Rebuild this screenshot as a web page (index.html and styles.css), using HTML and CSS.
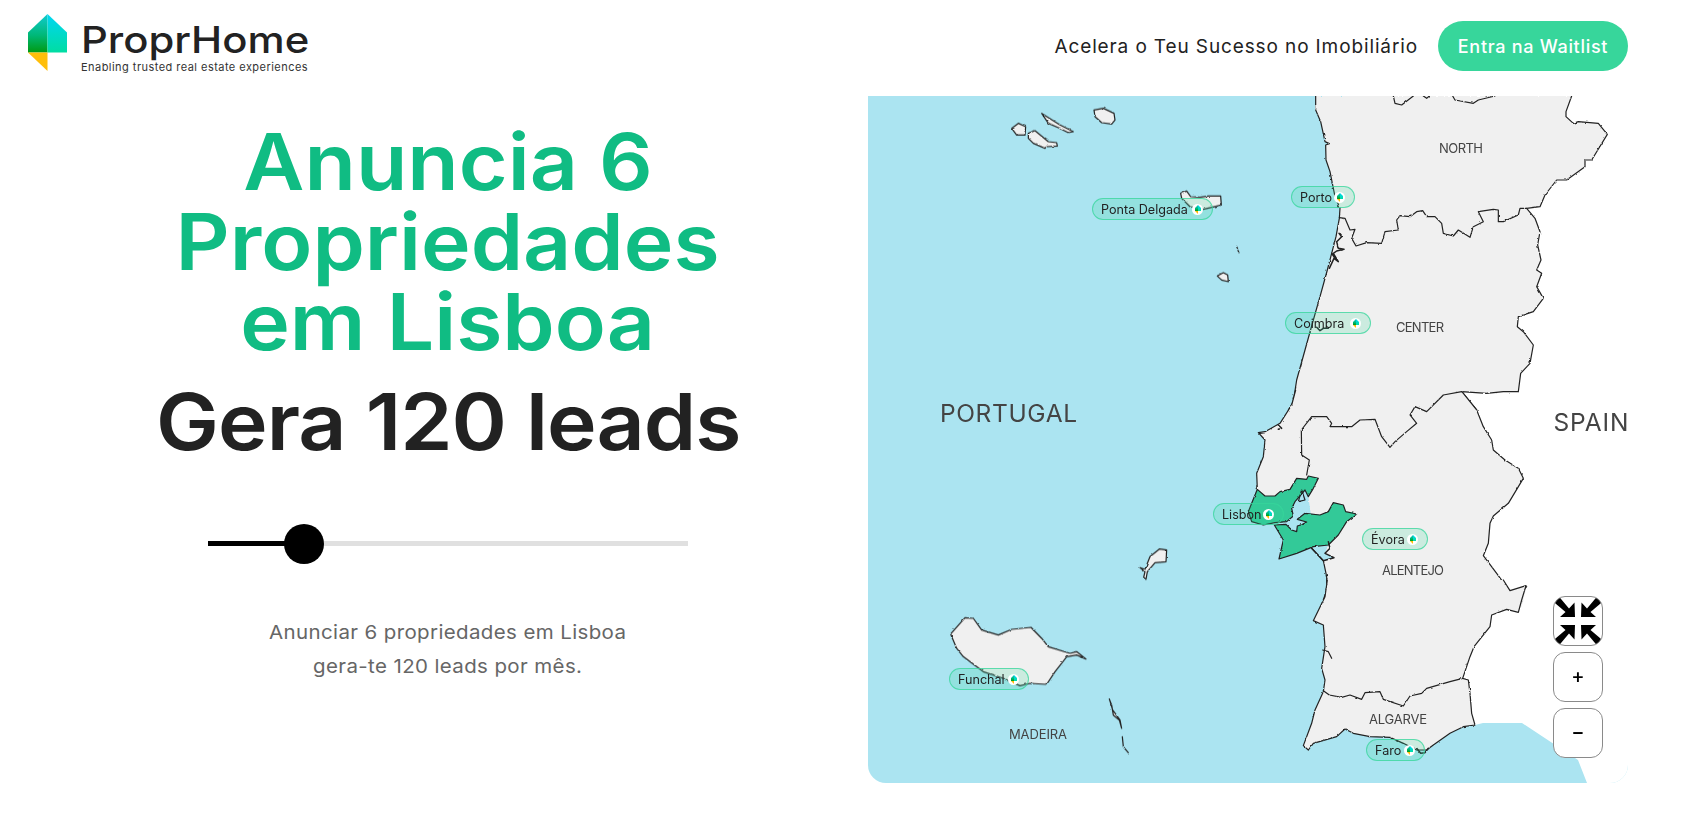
FILE: index.html
```html
<!DOCTYPE html>
<html lang="pt">
<head>
<meta charset="utf-8">
<title>ProprHome</title>
<link rel="stylesheet" href="styles.css">
</head>
<body>
<svg class="defs" width="0" height="0" aria-hidden="true">
  <defs>
    <linearGradient id="logoLeft" x1="0" y1="0" x2="0" y2="1">
      <stop offset="0" stop-color="#10CBD0"/>
      <stop offset=".55" stop-color="#00B878"/>
      <stop offset="1" stop-color="#009A12"/>
    </linearGradient>
    <linearGradient id="logoRight" x1="0" y1="0" x2="0" y2="1">
      <stop offset="0" stop-color="#00D6F4"/>
      <stop offset="1" stop-color="#00DDA2"/>
    </linearGradient>
    <symbol id="logoMark" viewBox="0 0 39 57">
      <path fill="url(#logoLeft)" d="M0 18.5 19.5 0V38.5H0Z"/>
      <path fill="url(#logoRight)" d="M19.5 0 39 18.5V38.5H19.5Z"/>
      <path fill="#FFBE0A" d="M0 38.5H19.5V57Z"/>
    </symbol>
    <path id="fitArrow" d="M22 21H7L12.500 16 0 5.500 5.500 0 16 12.500 21.500 6.500Z"/>
  </defs>
</svg>

<header class="topbar">
  <a class="brand" href="#">
    <svg class="brand-mark"><use href="#logoMark"/></svg>
    <span class="brand-text">
      <span class="brand-name">ProprHome</span>
      <span class="brand-tag">Enabling trusted real estate experiences</span>
    </span>
  </a>
  <nav class="topnav">
    <span class="nav-text">Acelera o Teu Sucesso no Imobiliário</span>
    <a class="cta" href="#">Entra na Waitlist</a>
  </nav>
</header>

<main class="content">
  <section class="pitch">
    <h1 class="headline">
      <span class="headline-line">Anuncia 6</span>
      <span class="headline-line">Propriedades</span>
      <span class="headline-line">em Lisboa</span>
    </h1>
    <h2 class="result">Gera 120 leads</h2>
    <div class="slider">
      <div class="slider-fill"></div>
      <div class="slider-thumb"></div>
    </div>
    <p class="summary">Anunciar 6 propriedades em Lisboa<br>gera-te 120 leads por mês.</p>
  </section>

  <section class="map">
    <svg class="map-art" viewBox="868 96 760 687" width="760" height="687">
      <defs>
        <filter id="rough" filterUnits="userSpaceOnUse" x="868" y="96" width="760" height="687" color-interpolation-filters="sRGB">
          <feTurbulence type="fractalNoise" baseFrequency=".22" numOctaves="2" seed="4"/>
          <feDisplacementMap in="SourceGraphic" scale="2.2" xChannelSelector="R" yChannelSelector="G"/>
        </filter>
      </defs>
      <path class="outside" d="M1345 96H1628V783H1587L1578 760 1522 723 1483 723 1475 725H1400L1345 600Z"/>
      <g filter="url(#rough)">
        <g transform="translate(1270 90) scale(.33333)">
          <path class="land" d="M137 18 137 60 152 95 165 155 178 161 167 165 168 210 180 245 195 320 210 355 208 385 198 440 185 490 172 540 150 620 130 690 105 780 80 870 70 935 55 960 620 960 575 905 650 910 700 905 745 905 752 850 780 820 790 765 760 725 742 710 745 680 790 665 820 625 800 590 815 550 800 540 813 510 803 465 810 425 795 385 770 355 810 350 825 315 860 270 890 270 945 230 945 210 965 210 1012 133 985 100 925 95 910 100 888 80 888 65 905 18Z"/>
          <path class="line" d="M137 18 137 60 152 95 165 155 178 161 167 165 168 210 180 245 195 320 210 355 208 385 198 440 185 490 172 540 150 620 130 690 105 780 80 870 70 935 55 960"/>
          <path class="line" d="M620 960 575 905 650 910 700 905 745 905 752 850 780 820 790 765 760 725 742 710 745 680 790 665 820 625 800 590 815 550 800 540 813 510 803 465 810 425 795 385 770 355 810 350 825 315 860 270 890 270 945 230 945 210 965 210 1012 133 985 100 925 95 910 100 888 80 888 65 905 18"/>
          <path class="line" d="M208 383 225 385 240 420 255 418 245 445 258 468 290 458 335 460 345 425 385 420 380 390 390 377 420 380 440 365 458 362 470 380 495 380 515 400 520 430 550 438 565 420 600 442 610 410 640 395 625 365 670 358 685 360 685 395 700 395 745 375 750 355 770 355"/>
          <path class="line" d="M370 18 375 40 395 45 430 18M460 18 470 25 478 18M548 18 555 30 610 40 625 30 675 18"/>
          <path class="line" d="M430 955 450 950 480 950 520 912 550 915 575 905"/>
          <path class="line thick" d="M207 430 215 440 200 455 205 475 222 478 200 483 190 490 205 515 192 505 178 535M185 490 195 505"/>
          <path class="line thick" d="M140 712 150 722 160 715 175 715"/>
        </g>
        <g transform="translate(1180 390) scale(.33333)">
          <path class="land" d="M347 0 335 45 300 100 255 125 235 128 255 150 250 200 230 250 232 298 255 318 285 318 300 305 330 298 350 265 380 268 385 258 415 265 400 295 385 320 392 370 420 375 445 365 460 338 490 345 497 365 530 372 500 395 475 435 445 465 435 490 460 503 430 512 440 560 440 600 420 660H1000L1025 650 1040 590 1030 600 990 605 950 550 910 497 925 460 930 400 940 378 985 340 1030 265 1015 235 975 210 940 180 935 150 910 110 890 60 850 10 845 0Z"/>
          <path class="line" d="M347 0 335 45 300 100 255 125 235 128 255 150 250 200 230 250 232 298"/>
          <path class="line" d="M395 475 430 512 440 560 440 600 420 660"/>
          <path class="line" d="M1040 590 1030 600 990 605 950 550 910 497 925 460 930 400 940 378 985 340 1030 265 1015 235 975 210 940 180 935 150 910 110 890 60 850 10 845 5"/>
          <path class="line" d="M985 660 1000 658M380 255 388 210 365 195 364 120 395 80 440 80 455 100 450 110 515 110 540 90 585 88 605 140 630 172 645 155 680 125 710 100 690 75 705 50 740 65 790 15 845 5"/>
          <path class="region" d="M232 298 255 318 285 318 300 305 330 298 350 265 380 268 385 258 415 265 400 295 385 320 375 300 345 335 335 355 340 378 320 395 285 398 250 405 215 395 205 365 215 340Z"/>
          <path class="region" d="M283 405 318 403 335 420 350 425 352 408 365 404 380 396 352 388 375 370 420 375 445 365 460 338 490 345 497 365 530 372 500 395 475 435 445 465 400 470 350 490 297 507 310 450Z"/>
          <path class="line thick" d="M445 455 450 475 435 490 462 503 430 512 395 475"/>
          <path class="line thick" d="M295 105 305 115 295 118"/>
          <path class="line" d="M365 300 355 335 375 330Z"/>
        </g>
        <g transform="translate(1270 580) scale(.33333)">
          <path class="land" d="M172 0 165 50 130 122 160 135 165 200 155 265 165 300 160 335 135 390 125 430 100 497 115 510 130 490 200 470 225 447 250 460 300 470 360 472 400 490 440 510 470 510 490 495 540 460 580 440 615 435 605 400 600 340 595 300 578 295 600 230 612 200 660 140 665 105 710 88 745 97 755 60 768 17 720 32 700 0Z"/>
          <path class="line" d="M172 0 165 50 130 122 160 135 165 200 155 265 165 300 160 335 135 390 125 430 100 497 115 510 130 490 200 470 225 447 250 460 300 470 360 472 400 490 440 510 470 510 490 495 540 460 580 440 615 435 605 400 600 340 595 300 578 295 600 230 612 200 660 140 665 105 710 88 745 97 755 60 768 17 720 32 700 0"/>
          <path class="line" d="M160 332 178 345 215 352 240 345 275 358 285 338 330 335 340 358 400 378 420 348 455 340 470 325 540 305 578 295"/>
          <path class="line" d="M158 210 175 215 185 235"/>
          <path class="line thick" d="M440 505 452 520 465 518 475 505"/>
        </g>
        <g transform="translate(860 90) scale(.33333)">
          <path class="isle" d="M455 115 475 100 497 110 495 135 470 135Z"/>
          <path class="isle" d="M505 130 525 122 565 155 590 158 592 168 560 170 555 175 520 160 505 145Z"/>
          <path class="isle" d="M545 70 600 105 640 125 625 128 595 113 565 100Z"/>
          <path class="isle" d="M702 60 730 55 762 70 765 90 755 102 725 98 705 80Z"/>
          <path class="isle" d="M962 310 980 303 992 320 1020 322 1045 318 1082 318 1084 345 1030 358 990 350 965 325Z"/>
          <path class="isle" d="M1072 558 1090 548 1103 555 1105 575 1085 570Z"/>
          <path class="line" d="M1130 470 1133 476M1134 481 1137 488"/>
        </g>
        <g transform="translate(860 520) scale(.33333)">
          <path class="isle" d="M840 143 855 148 870 110 898 87 920 90 918 125 885 128 862 155 858 178 851 172 855 155Z"/>
          <path class="isle" d="M272 342 315 293 340 295 365 330 415 345 455 328 513 322 545 355 565 380 630 400 650 395 678 417 650 405 620 410 605 430 585 455 560 493 510 490 480 497 430 475 370 455 310 410 290 385Z"/>
          <path class="isle" d="M748 537 758 570 780 600 785 625 778 600 760 585 755 555Z"/>
          <path class="line" d="M787 650 790 680 805 698"/>
        </g>
      </g>
      <text class="label-lg" x="1008.500" y="421.500" text-anchor="middle" textLength="137">PORTUGAL</text>
      <text class="label-lg" x="1591" y="430.500" text-anchor="middle" textLength="75">SPAIN</text>
      <text class="label-sm" x="1461" y="153" text-anchor="middle" textLength="44">NORTH</text>
      <text class="label-sm" x="1420" y="331.500" text-anchor="middle" textLength="48">CENTER</text>
      <text class="label-sm" x="1413" y="574.500" text-anchor="middle" textLength="62">ALENTEJO</text>
      <text class="label-sm" x="1398" y="724" text-anchor="middle" textLength="58">ALGARVE</text>
      <text class="label-sm" x="1038" y="739" text-anchor="middle" textLength="58">MADEIRA</text>
    </svg>

    <div class="pin pin-delgada"><span>Ponta Delgada</span><i class="pin-dot"><svg><use href="#logoMark"/></svg></i></div>
    <div class="pin pin-porto"><span>Porto</span><i class="pin-dot"><svg><use href="#logoMark"/></svg></i></div>
    <div class="pin pin-coimbra"><span>Coimbra</span><i class="pin-dot"><svg><use href="#logoMark"/></svg></i></div>
    <div class="pin pin-lisbon"><span>Lisbon</span><i class="pin-dot"><svg><use href="#logoMark"/></svg></i></div>
    <div class="pin pin-evora"><span>Évora</span><i class="pin-dot"><svg><use href="#logoMark"/></svg></i></div>
    <div class="pin pin-faro"><span>Faro</span><i class="pin-dot"><svg><use href="#logoMark"/></svg></i></div>
    <div class="pin pin-funchal"><span>Funchal</span><i class="pin-dot"><svg><use href="#logoMark"/></svg></i></div>

    <div class="map-controls">
      <button class="map-btn" type="button" aria-label="Fit">
        <svg viewBox="0 0 50 50" class="fit-icon">
          <use href="#fitArrow"/>
          <use href="#fitArrow" transform="matrix(-1 0 0 1 50 0)"/>
          <use href="#fitArrow" transform="matrix(1 0 0 -1 0 50)"/>
          <use href="#fitArrow" transform="matrix(-1 0 0 -1 50 50)"/>
        </svg>
      </button>
      <button class="map-btn map-btn-text" type="button">+</button>
      <button class="map-btn map-btn-text" type="button">−</button>
    </div>
  </section>
</main>
</body>
</html>
```
FILE: styles.css
```css
* { box-sizing: border-box; }

html, body { margin: 0; padding: 0; background: #fff; }

body {
  font-family: "Inter", "Noto Sans", "Liberation Sans", sans-serif;
  color: #222;
  height: 813px;
  overflow: hidden;
}

.defs { position: absolute; }

.topbar {
  height: 96px;
  display: flex;
  align-items: center;
  justify-content: space-between;
  padding: 0 54px 4px 28px;
}

.brand {
  display: flex;
  gap: 14px;
  color: #222;
  text-decoration: none;
  margin-bottom: 4px;
}

.brand-mark { width: 39px; height: 57px; display: block; }

.brand-text { display: flex; flex-direction: column; align-items: flex-start; padding-top: 5px; }

.brand-name {
  display: block;
  font-size: 37px;
  line-height: 42px;
  font-weight: 500;
  transform: scaleX(1.13);
  transform-origin: left center;
}

.brand-tag {
  font-size: 11px;
  line-height: 14px;
  font-weight: 400;
  color: #333;
  letter-spacing: .46px;
  white-space: nowrap;
  margin-top: -1px;
}

.topnav { display: flex; align-items: center; gap: 20px; }

.nav-text { font-size: 19px; color: #222; letter-spacing: .88px; white-space: nowrap; }

.cta {
  width: 190px;
  height: 50px;
  border-radius: 25px;
  background: #37D69B;
  color: #fff;
  font-size: 18px;
  font-weight: 500;
  letter-spacing: .7px;
  text-decoration: none;
  white-space: nowrap;
  display: flex;
  align-items: center;
  justify-content: center;
}

.content {
  display: grid;
  grid-template-columns: 868px 760px;
  height: 687px;
}

.pitch {
  display: flex;
  flex-direction: column;
  align-items: center;
  padding-left: 28px;
  padding-top: 26px;
}

.headline {
  margin: 0;
  display: flex;
  flex-direction: column;
  align-items: center;
  color: #10BC83;
  font-weight: 600;
  font-size: 78px;
  line-height: 80px;
}

.headline-line {
  display: block;
  white-space: nowrap;
  transform: scaleX(1.077);
}

.result {
  margin: 20px 0 0;
  font-size: 78px;
  line-height: 80px;
  font-weight: 600;
  color: #222;
  letter-spacing: -.93px;
  white-space: nowrap;
  transform: scaleX(1.077);
}

.slider {
  position: relative;
  width: 480px;
  height: 5px;
  margin-top: 79px;
  background: #E0E0E0;
}

.slider-fill {
  width: 96px;
  height: 5px;
  background: #000;
}

.slider-thumb {
  position: absolute;
  left: 76px;
  top: -17.5px;
  width: 40px;
  height: 40px;
  border-radius: 50%;
  background: #000;
}

.summary {
  margin: 70px 0 0;
  text-align: center;
  font-size: 19px;
  line-height: 34px;
  letter-spacing: .35px;
  color: #666;
  white-space: nowrap;
  transform: scaleX(1.078);
}

.map {
  position: relative;
  width: 760px;
  height: 687px;
  background: #ABE4F1;
  border-radius: 0 0 18px 18px;
  overflow: hidden;
}

.map-art { display: block; }

.outside { fill: #fff; }
.land { fill: #F0F0F0; stroke: none; }
.line { fill: none; stroke: #222; stroke-width: 3.6; stroke-linejoin: round; stroke-linecap: round; }
.thick { stroke-width: 4.5; }
.isle { fill: #F0F0F0; stroke: #222; stroke-width: 3.6; stroke-linejoin: round; }
.region { fill: #33C998; stroke: #222; stroke-width: 3.6; stroke-linejoin: round; }

.label-lg { font-size: 24.5px; fill: #444; font-family: "Inter", sans-serif; }
.label-sm { font-size: 13px; fill: #444; font-family: "Inter", sans-serif; }

.pin {
  position: absolute;
  height: 22px;
  display: flex;
  align-items: center;
  justify-content: space-between;
  padding: 0 9px 0 8px;
  border: 1px solid rgba(55, 214, 155, .75);
  border-radius: 11px;
  background: rgba(55, 214, 155, .2);
  font-size: 12.6px;
  color: #222;
  white-space: nowrap;
}

.pin-dot {
  width: 11px;
  height: 11px;
  border-radius: 50%;
  background: #fff;
  display: flex;
  align-items: center;
  justify-content: center;
  flex: none;
}

.pin-dot svg { width: 6px; height: 9px; display: block; }

.pin-delgada { left: 224px; top: 102px; width: 121px; }
.pin-porto { left: 423px; top: 90px; width: 64px; }
.pin-coimbra { left: 417px; top: 216px; width: 86px; }
.pin-lisbon { left: 345px; top: 407px; width: 71px; }
.pin-evora { left: 494px; top: 432px; width: 66px; }
.pin-faro { left: 498px; top: 643px; width: 59px; }
.pin-funchal { left: 81px; top: 572px; width: 80px; }

.map-controls {
  position: absolute;
  left: 685px;
  top: 500px;
  display: flex;
  flex-direction: column;
  gap: 6px;
}

.map-btn {
  width: 50px;
  height: 50px;
  padding: 0;
  border: 1.5px solid #8a8a8a;
  border-radius: 12px;
  background: #fff;
  color: #000;
  font-family: "Inter", sans-serif;
  font-size: 20px;
  font-weight: 500;
  overflow: hidden;
  display: flex;
  align-items: center;
  justify-content: center;
}

.map-btn-text { padding-bottom: 2px; }

.fit-icon { width: 50px; height: 50px; flex: none; display: block; }
```
